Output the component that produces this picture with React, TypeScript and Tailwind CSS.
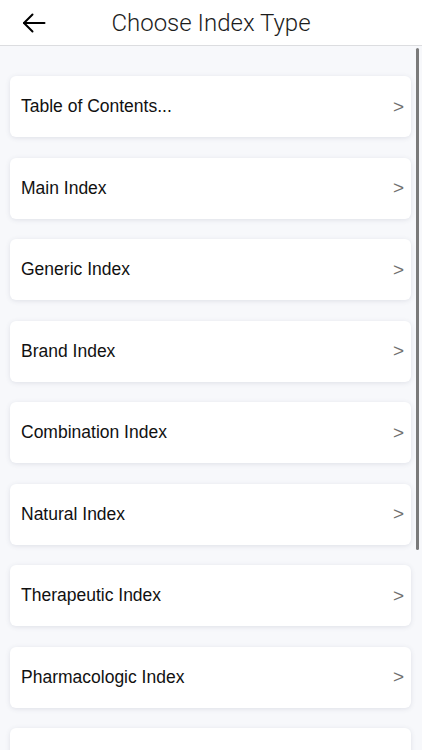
import React from "react";

const items = [
  "Table of Contents...",
  "Main Index",
  "Generic Index",
  "Brand Index",
  "Combination Index",
  "Natural Index",
  "Therapeutic Index",
  "Pharmacologic Index",
  "Alphabetical Index",
];

export default function App() {
  return (
    <div
      className="relative h-[750px] w-[422px] overflow-hidden bg-[#f7f8fb]"
      style={{ fontFamily: '"Helvetica Neue", "Liberation Sans", Arial, sans-serif' }}
    >
      <header className="relative flex h-[46px] items-center justify-center border-b border-[#dcdde0] bg-white">
        <button className="absolute left-[21px] top-[10px] text-black">
          <svg width="26" height="26" viewBox="0 0 26 26" fill="none" stroke="currentColor" strokeWidth="2" strokeLinecap="round" strokeLinejoin="round">
            <path d="M23.5 13H3" />
            <path d="M11.5 4.5L3 13l8.5 8.5" />
          </svg>
        </button>
        <h1 className="text-[24px] font-light text-[#1c1c1c] [font-family:Roboto,'Liberation_Sans',sans-serif]">
          Choose Index Type
        </h1>
      </header>

      <div className="flex flex-col gap-[20.5px] px-[10px] pt-[30px]">
        {items.map((item) => (
          <div
            key={item}
            className="flex h-[61px] w-[401px] shrink-0 items-center justify-between rounded-[6px] bg-white pl-[11px] pr-[7px] shadow-[0_1px_5px_rgba(60,70,100,0.13)]"
          >
            <span className="text-[17.5px] text-[#111]">{item}</span>
            <span className="mt-[1px] text-[19px] text-[#707070]">&gt;</span>
          </div>
        ))}
      </div>

      <div className="absolute left-[416px] top-[48px] h-[502px] w-[3px] rounded-full bg-[#7a7a7a]" />
    </div>
  );
}
